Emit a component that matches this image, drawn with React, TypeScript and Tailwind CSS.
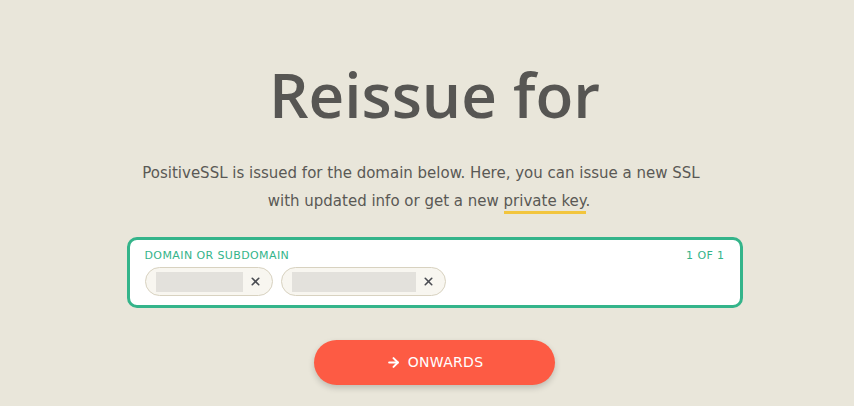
import { ArrowRight, X } from "lucide-react";

function Chip({ width }: { width: number }) {
  return (
    <div className="flex h-[29px] items-center gap-[6px] rounded-full border border-[#d8d2c0] bg-[#f8f6f0] pl-[10px] pr-[10px]">
      <div className="h-[20px] bg-[#e3e1dc]" style={{ width }} />
      <X size={13} strokeWidth={3} className="text-[#4a4c52]" />
    </div>
  );
}

export default function App() {
  return (
    <div className="min-h-[406px] w-full bg-[#e9e6da] font-['DejaVu_Sans',sans-serif] text-[#5a5955]">
      <div className="flex flex-col items-center pl-[15px] pt-[52px]">
        <h1 className="font-['Open_Sans',sans-serif] text-[62px] font-semibold leading-[84px] text-[#575653]">
          Reissue for
        </h1>
        <p className="mt-[23px] -ml-[27px] text-center text-[15px] leading-[28px]">
          PositiveSSL is issued for the domain below. Here, you can issue a new SSL
          <br />
          <span className="ml-[16px]">
            with updated info or get a new{" "}
            <span className="border-b-[3px] border-[#f2c53d] pb-[1px]">private key</span>.
          </span>
        </p>

        <div className="mt-[22px] h-[71px] w-[616px] rounded-[10px] border-[3px] border-[#34b48a] bg-white px-[15px] pt-[9px]">
          <div className="flex items-center justify-between text-[11px] leading-[14px] tracking-[0.4px] text-[#34b48a]">
            <span>DOMAIN OR SUBDOMAIN</span>
            <span>1 OF 1</span>
          </div>
          <div className="mt-[4px] flex gap-[8px]">
            <Chip width={87} />
            <Chip width={124} />
          </div>
        </div>

        <button className="mt-[32px] flex h-[45px] w-[241px] items-center justify-center gap-[7px] rounded-full bg-[#fd5b44] text-[14px] tracking-[0.3px] text-white shadow-[0_3px_6px_rgba(0,0,0,0.18)]">
          <ArrowRight size={15} strokeWidth={3.2} />
          ONWARDS
        </button>
      </div>
    </div>
  );
}
